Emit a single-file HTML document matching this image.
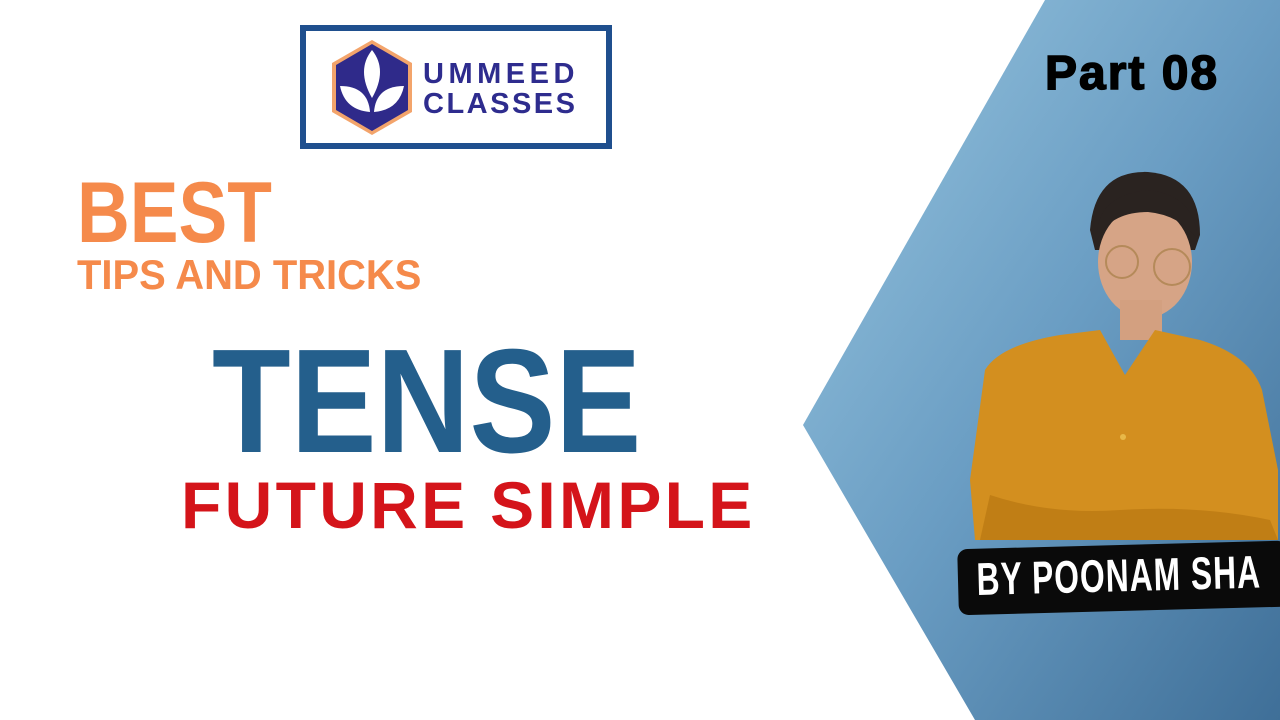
<!DOCTYPE html>
<html><head><meta charset="utf-8"><style>
*{margin:0;padding:0;box-sizing:border-box}
body{width:1280px;height:720px;overflow:hidden;background:#fff;position:relative;font-family:"Liberation Sans",Arial,sans-serif}
.t{position:absolute;font-weight:bold;white-space:nowrap;line-height:1;transform-origin:0 0}
</style></head><body>
<svg width="1280" height="720" style="position:absolute;left:0;top:0">
<defs>
<linearGradient id="g" x1="0" y1="0" x2="1" y2="1">
<stop offset="0" stop-color="#98c6e0"/><stop offset="0.5" stop-color="#6a9dc3"/><stop offset="1" stop-color="#3f6f98"/>
</linearGradient>
</defs>
<polygon points="1045,0 1280,0 1280,720 975,720 803,425" fill="url(#g)"/>
<path d="M1090,230 Q1095,170 1148,172 Q1200,176 1200,235 L1195,250 L1095,250 Z" fill="#2a2320"/>
<ellipse cx="1145" cy="262" rx="47" ry="56" fill="#d6a486"/>
<path d="M1097,232 Q1100,195 1148,190 Q1195,195 1198,240 Q1180,215 1148,212 Q1110,212 1097,240Z" fill="#2a2320"/>
<circle cx="1122" cy="262" r="16" fill="none" stroke="#b58a5a" stroke-width="2"/>
<circle cx="1172" cy="267" r="18" fill="none" stroke="#b58a5a" stroke-width="2"/>
<rect x="1120" y="300" width="42" height="40" fill="#d3a080"/>
<path d="M985,370 Q1000,345 1060,335 L1100,330 L1125,375 L1155,330 L1200,340 Q1250,355 1262,390 L1278,470 L1278,540 L975,540 L970,480 Z" fill="#d38f1f"/>
<path d="M990,495 Q1050,515 1120,510 Q1200,505 1270,520 L1278,540 L980,540 Z" fill="#c07e15"/>
<circle cx="1123" cy="437" r="3" fill="#e8b848"/>
<g transform="rotate(-1.5 1120 578)">
<rect x="958" y="545" width="330" height="66" rx="10" fill="#0a0a0a"/>
</g>
<rect x="303" y="28" width="306" height="118" fill="#fff" stroke="#1f4f8e" stroke-width="6"/>
<polygon points="372,40 412,63 412,112 372,135 332,112 332,63" fill="#f3a46b"/>
<polygon points="372,44 408,65 408,110 372,131 336,110 336,65" fill="#2f2a8a"/>
<path d="M372,50 Q388,70 372,98 Q356,70 372,50Z" fill="#fff"/>
<path d="M340,86 Q368,86 370,112 Q345,110 340,86Z" fill="#fff"/>
<path d="M404,86 Q376,86 374,112 Q399,110 404,86Z" fill="#fff"/>
</svg>
<div class="t" style="left:423px;top:60px;font-size:29px;color:#2e2c8e;letter-spacing:4.5px">UMMEED</div>
<div class="t" style="left:423px;top:90px;font-size:29px;color:#2e2c8e;letter-spacing:2.5px">CLASSES</div>
<div class="t" style="left:1045px;top:50px;font-size:48px;color:#000;letter-spacing:2px;-webkit-text-stroke:1.5px #000">Part 08</div>
<div class="t" style="left:77px;top:170px;font-size:86px;color:#f58a4b;transform:scaleX(.85)">BEST</div>
<div class="t" style="left:77px;top:254px;font-size:42px;color:#f58a4b;transform:scaleX(.95)">TIPS AND TRICKS</div>
<div class="t" style="left:212px;top:328px;font-size:148px;color:#245f8c;transform:scaleX(.87)">TENSE</div>
<div class="t" style="left:181px;top:472px;font-size:66px;color:#d4141a;letter-spacing:3.3px">FUTURE SIMPLE</div>
<div class="t" style="left:976px;top:556px;font-size:46px;color:#fff;letter-spacing:1.5px;transform:rotate(-1.5deg) scaleX(.69)">BY POONAM SHA</div>
</body></html>
